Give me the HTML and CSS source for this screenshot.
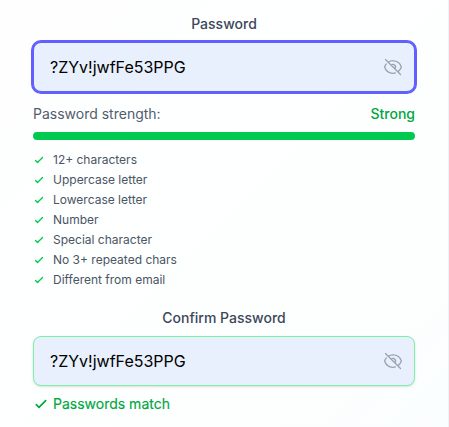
FILE: index.html
```html
<!DOCTYPE html>
<html lang="en">
<head>
<meta charset="utf-8">
<title>Password</title>
<link rel="stylesheet" href="styles.css">
</head>
<body>
<main class="card">
  <label class="label" for="password">Password</label>
  <div class="field field-focused">
    <input id="password" class="input" type="text" value="?ZYv!jwfFe53PPG">
    <svg class="eye" viewBox="0 0 24 24"><path d="M3.98 8.223A10.477 10.477 0 001.934 12C3.226 16.338 7.244 19.5 12 19.5c.993 0 1.953-.138 2.863-.395M6.228 6.228A10.45 10.45 0 0112 4.5c4.756 0 8.773 3.162 10.065 7.498a10.523 10.523 0 01-4.293 5.774M6.228 6.228L3 3m3.228 3.228l3.65 3.65m7.894 7.894L21 21m-3.228-3.228l-3.65-3.65m0 0a3 3 0 10-4.243-4.243m4.242 4.242L9.88 9.88"/></svg>
  </div>
  <div class="strength">
    <span>Password strength:</span>
    <span class="strength-value">Strong</span>
  </div>
  <div class="bar"></div>
  <ul class="rules">
    <li><svg viewBox="0 0 24 24"><path d="M5 13l4 4L19 7"/></svg>12+ characters</li>
    <li><svg viewBox="0 0 24 24"><path d="M5 13l4 4L19 7"/></svg>Uppercase letter</li>
    <li><svg viewBox="0 0 24 24"><path d="M5 13l4 4L19 7"/></svg>Lowercase letter</li>
    <li><svg viewBox="0 0 24 24"><path d="M5 13l4 4L19 7"/></svg>Number</li>
    <li><svg viewBox="0 0 24 24"><path d="M5 13l4 4L19 7"/></svg>Special character</li>
    <li><svg viewBox="0 0 24 24"><path d="M5 13l4 4L19 7"/></svg>No 3+ repeated chars</li>
    <li><svg viewBox="0 0 24 24"><path d="M5 13l4 4L19 7"/></svg>Different from email</li>
  </ul>
  <label class="label" for="confirm">Confirm Password</label>
  <div class="field field-valid">
    <input id="confirm" class="input" type="text" value="?ZYv!jwfFe53PPG">
    <svg class="eye" viewBox="0 0 24 24"><path d="M3.98 8.223A10.477 10.477 0 001.934 12C3.226 16.338 7.244 19.5 12 19.5c.993 0 1.953-.138 2.863-.395M6.228 6.228A10.45 10.45 0 0112 4.5c4.756 0 8.773 3.162 10.065 7.498a10.523 10.523 0 01-4.293 5.774M6.228 6.228L3 3m3.228 3.228l3.65 3.65m7.894 7.894L21 21m-3.228-3.228l-3.65-3.65m0 0a3 3 0 10-4.243-4.243m4.242 4.242L9.88 9.88"/></svg>
  </div>
  <p class="match"><svg viewBox="0 0 24 24"><path d="M5 13l4 4L19 7"/></svg>Passwords match</p>
</main>
</body>
</html>
```
FILE: styles.css
```css
* { box-sizing: border-box; }
body {
  margin: 0;
  height: 427px;
  overflow: hidden;
  font-family: Inter, sans-serif;
  color: #4a5565;
  background: linear-gradient(135deg, #fefeff, #fdfffe 75%, #fbfeff);
}
svg { flex: none; fill: none; stroke-linecap: round; stroke-linejoin: round; }
.card {
  height: 427px;
  padding: 14px 33px 0;
  border-right: 1px solid #f0f3f5;
}
.label {
  display: block;
  margin-bottom: 8px;
  text-align: center;
  font-size: 14px;
  line-height: 20px;
  font-weight: 500;
  color: #3c475a;
}
.field {
  display: flex;
  align-items: center;
  height: 50px;
  padding: 0 11px 0 16px;
  border: 1px solid;
  border-radius: 8px;
  background: #e8effd;
}
.field-focused { border-color: #615fff; box-shadow: 0 0 0 2px #615fff; }
.field-valid { border-color: #7bf1a8; box-shadow: 0 1px 3px rgba(0, 0, 0, .1), 0 1px 2px -1px rgba(0, 0, 0, .1); }
.input {
  flex: 1;
  min-width: 0;
  padding: 0;
  border: 0;
  outline: 0;
  background: none;
  font: 16px/24px Inter, sans-serif;
  color: #000;
}
.eye { width: 20px; height: 20px; stroke: #99a1af; stroke-width: 1.5; }
.strength {
  display: flex;
  justify-content: space-between;
  margin: 12px 0 8px;
  font-size: 14px;
  line-height: 20px;
  color: #525d6e;
}
.strength-value { font-weight: 500; color: #00a63e; }
.bar { height: 8px; border-radius: 4px; background: #00c950; }
.rules {
  margin: 12px 0 20px;
  padding: 0;
  list-style: none;
  font-size: 12px;
  line-height: 16px;
}
.rules li { display: flex; align-items: center; gap: 8px; margin-bottom: 4px; }
.rules svg { width: 12px; height: 12px; stroke: #00c950; stroke-width: 2.6; }
.match {
  display: flex;
  align-items: center;
  gap: 4px;
  margin: 8px 0 0;
  font-size: 14px;
  line-height: 20px;
  color: #00a63e;
  -webkit-text-stroke: .15px #00a63e;
}
.match svg { width: 16px; height: 16px; stroke: #00a63e; stroke-width: 2.5; }
```
